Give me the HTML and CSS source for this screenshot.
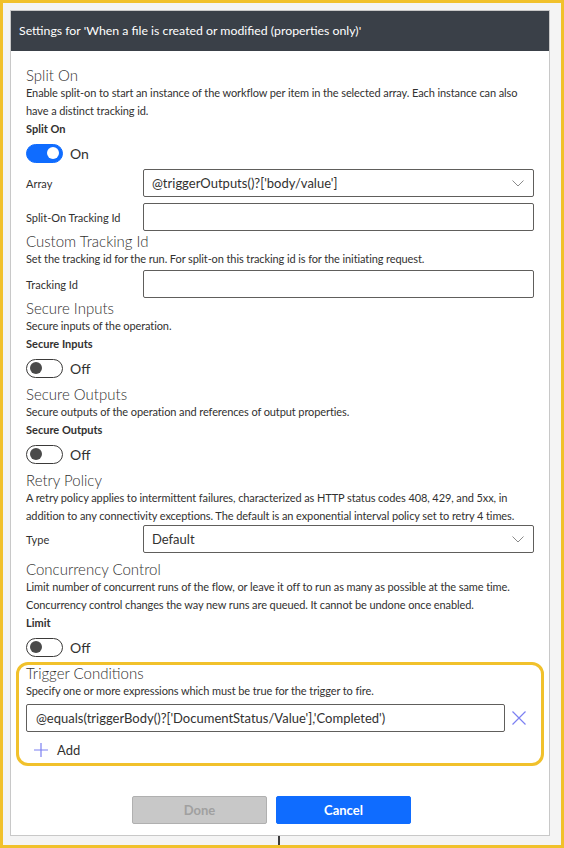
FILE: index.html
```html
<!DOCTYPE html>
<html>
<head>
<meta charset="utf-8">
<link rel="stylesheet" href="styles.css">
</head>
<body>
<div class="frame">
  <div class="panel">
    <div class="header">Settings for 'When a file is created or modified (properties only)'</div>
    <div class="content">
      <div class="title">Split On</div>
      <div class="desc">Enable split-on to start an instance of the workflow per item in the selected array. Each instance can also have a distinct tracking id.</div>
      <div class="label">Split On</div>
      <div class="toggle-row"><span class="toggle on"><span class="knob"></span></span><span class="state">On</span></div>
      <div class="rows">
        <div class="row">
          <div class="row-label">Array</div>
          <div class="field select">@triggerOutputs()?['body/value']
            <svg class="chev" width="12" height="7" viewBox="0 0 12 7"><path d="M0.5 0.5 L6 6 L11.5 0.5" fill="none" stroke="#8a8a8a" stroke-width="1"/></svg>
          </div>
        </div>
        <div class="row">
          <div class="row-label">Split-On Tracking Id</div>
          <div class="field"></div>
        </div>
      </div>

      <div class="title t-custom">Custom Tracking Id</div>
      <div class="desc">Set the tracking id for the run. For split-on this tracking id is for the initiating request.</div>
      <div class="row row-after-desc">
        <div class="row-label">Tracking Id</div>
        <div class="field"></div>
      </div>

      <div class="title t-after-row">Secure Inputs</div>
      <div class="desc">Secure inputs of the operation.</div>
      <div class="label">Secure Inputs</div>
      <div class="toggle-row"><span class="toggle"><span class="knob"></span></span><span class="state">Off</span></div>

      <div class="title t-after-toggle">Secure Outputs</div>
      <div class="desc">Secure outputs of the operation and references of output properties.</div>
      <div class="label">Secure Outputs</div>
      <div class="toggle-row"><span class="toggle"><span class="knob"></span></span><span class="state">Off</span></div>

      <div class="title t-after-toggle">Retry Policy</div>
      <div class="desc">A retry policy applies to intermittent failures, characterized as HTTP status codes 408, 429, and 5xx, in addition to any connectivity exceptions. The default is an exponential interval policy set to retry 4 times.</div>
      <div class="row">
        <div class="row-label">Type</div>
        <div class="field select">Default
          <svg class="chev" width="12" height="7" viewBox="0 0 12 7"><path d="M0.5 0.5 L6 6 L11.5 0.5" fill="none" stroke="#8a8a8a" stroke-width="1"/></svg>
        </div>
      </div>

      <div class="title t-after-toggle">Concurrency Control</div>
      <div class="desc">Limit number of concurrent runs of the flow, or leave it off to run as many as possible at the same time. Concurrency control changes the way new runs are queued. It cannot be undone once enabled.</div>
      <div class="label">Limit</div>
      <div class="toggle-row"><span class="toggle"><span class="knob"></span></span><span class="state">Off</span></div>

      <div class="highlight">
        <div class="title">Trigger Conditions</div>
        <div class="desc">Specify one or more expressions which must be true for the trigger to fire.</div>
        <div class="cond-row">
          <div class="field cond">@equals(triggerBody()?['DocumentStatus/Value'],'Completed')</div>
          <svg class="remove" width="14" height="14" viewBox="0 0 14 14"><path d="M0.5 0.5 L13.5 13.5 M13.5 0.5 L0.5 13.5" stroke="#7c80f2" stroke-width="1.2" fill="none"/></svg>
        </div>
        <div class="add"><svg width="14" height="14" viewBox="0 0 14 14"><path d="M7 0 V14 M0 7 H14" stroke="#7c80f2" stroke-width="1.2" fill="none"/></svg><span>Add</span></div>
      </div>

      <div class="buttons">
        <button class="btn done" disabled>Done</button>
        <button class="btn cancel">Cancel</button>
      </div>
    </div>
  </div>
  <div class="connector"></div>
</div>
</body>
</html>
```

FILE: styles.css
```css
* { box-sizing: border-box; }
html, body { margin: 0; padding: 0; }
body {
  font-family: "Lato", "Liberation Sans", sans-serif;
  color: #323130;
  background: #f4f4f4;
}
.frame {
  width: 564px;
  height: 848px;
  border: 3px solid #f1c12b;
  padding: 7px 11px 0 7px;
  background: #f4f4f4;
  overflow: hidden;
}
.panel {
  height: 826px;
  background: #fff;
  border: 1px solid #c8c8c8;
}
.header {
  height: 40px;
  background: #3a4048;
  color: #fff;
  font-size: 12.3px;
  line-height: 40px;
  padding-left: 8px;
}
.content {
  padding: 16px 15px 0 15px;
}
.title {
  font-size: 15px;
  line-height: 17px;
  font-weight: 300;
  color: #323130;
}
.t-custom { margin-top: 2px; }
.t-after-row { margin-top: 2px; }
.t-after-toggle { margin-top: 8px; }
.desc {
  font-size: 11px;
  letter-spacing: -0.1px;
  line-height: 18px;
  color: #323130;
}
.label {
  font-size: 11px;
  line-height: 18px;
  font-weight: 700;
  color: #323130;
}
.toggle-row {
  display: flex;
  align-items: center;
  gap: 7px;
  margin-top: 5px;
  height: 20px;
}
.toggle {
  width: 37px;
  height: 19px;
  border: 1px solid #3b3a39;
  border-radius: 10px;
  display: flex;
  align-items: center;
  padding: 0 3px;
}
.toggle .knob {
  width: 12px;
  height: 12px;
  border-radius: 50%;
  background: #4a4a4a;
}
.toggle.on {
  background: #0f6cff;
  border-color: #0f6cff;
  justify-content: flex-end;
}
.toggle.on .knob { background: #fff; }
.state {
  font-size: 14px;
  color: #323130;
}
.rows {
  margin-top: 6px;
  display: flex;
  flex-direction: column;
  gap: 6px;
}
.row {
  display: flex;
  align-items: center;
  height: 28px;
}
.row-after-desc { margin-top: 2px; }
.row-label {
  width: 117px;
  flex: none;
  font-size: 11px;
}
.field {
  flex: 1;
  height: 28px;
  border: 1px solid #605e5c;
  border-radius: 2px;
  font-size: 13px;
  line-height: 26px;
  padding-left: 8px;
  color: #323130;
}
.select {
  display: flex;
  justify-content: space-between;
  align-items: center;
  padding-right: 9px;
}
.chev { flex: none; }
.highlight {
  margin: 5px -10px 0 -10px;
  border: 3px solid #f1c12b;
  border-radius: 12px;
  padding: 0 3px 0 7px;
  height: 104px;
}
.cond-row {
  display: flex;
  align-items: center;
  margin-top: 4px;
}
.cond {
  flex: none;
  width: 479px;
  padding-left: 9px;
}
.remove { margin-left: 7px; }
.add {
  display: flex;
  align-items: center;
  margin-top: 6px;
  padding-left: 8px;
  gap: 9px;
  font-size: 13px;
  height: 24px;
}
.buttons {
  display: flex;
  justify-content: center;
  gap: 9px;
  margin-top: 30px;
  padding-right: 17px;
}
.btn {
  width: 135px;
  height: 28px;
  font-family: inherit;
  font-size: 13px;
  font-weight: 700;
  border-radius: 2px;
}
.done {
  background: #c8c8c8;
  border: 1px solid #b0b0b0;
  color: #a0a0a0;
}
.cancel {
  background: #0f6cff;
  border: 1px solid #0f6cff;
  color: #fff;
}
.connector {
  width: 2px;
  height: 9px;
  background: #3b3a39;
  margin-left: 268px;
}
```
